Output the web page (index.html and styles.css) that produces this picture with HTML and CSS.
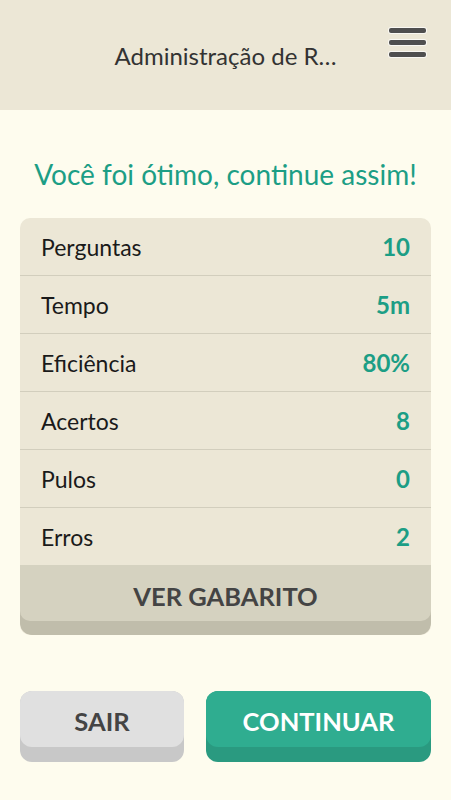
FILE: index.html
```html
<!DOCTYPE html>
<html lang="pt">
<head>
<meta charset="utf-8">
<title>Resultado</title>
<link rel="stylesheet" href="styles.css">
</head>
<body>
<header class="topbar">
  <div class="title">Administração de R…</div>
  <button class="menu" aria-label="Menu"><span></span><span></span><span></span></button>
</header>
<main class="content">
  <h1 class="headline">Você foi ótimo, continue assim!</h1>
  <section class="card">
    <div class="row"><span class="label">Perguntas</span><span class="value">10</span></div>
    <div class="row"><span class="label">Tempo</span><span class="value">5m</span></div>
    <div class="row"><span class="label">Eficiência</span><span class="value">80%</span></div>
    <div class="row"><span class="label">Acertos</span><span class="value">8</span></div>
    <div class="row"><span class="label">Pulos</span><span class="value">0</span></div>
    <div class="row last"><span class="label">Erros</span><span class="value">2</span></div>
    <button class="gabarito"><span class="face">VER GABARITO</span></button>
  </section>
  <div class="actions">
    <button class="btn btn-exit"><span class="face">SAIR</span></button>
    <button class="btn btn-continue"><span class="face">CONTINUAR</span></button>
  </div>
</main>
</body>
</html>
```
FILE: styles.css
```css
* { box-sizing: border-box; }
html, body { margin: 0; padding: 0; }
body {
  background: #fefcee;
  font-family: Lato, "Open Sans", sans-serif;
  width: 451px;
  min-height: 800px;
}
button { font-family: inherit; border: 0; padding: 0; margin: 0; cursor: pointer; }

.topbar {
  height: 110px;
  background: #ece7d6;
  display: flex;
  align-items: center;
  justify-content: center;
  position: relative;
}
.title {
  font-size: 24px;
  color: #333;
  white-space: nowrap;
  text-align: center;
  margin-top: 1px;
}
.menu {
  position: absolute;
  right: 25px;
  top: 28px;
  width: 37px;
  background: transparent;
  display: flex;
  flex-direction: column;
  gap: 7px;
}
.menu span {
  display: block;
  height: 5px;
  background: #4f4f4f;
  border-radius: 2px;
  box-shadow: 0 0 0 1px rgba(255,255,255,0.7);
}

.content { padding: 0 20px; }
.headline {
  margin: 0;
  padding-top: 47px;
  height: 108px;
  font-size: 28px;
  font-weight: 400;
  color: #1c9e85;
  text-align: center;
}
.card {
  background: #ece7d6;
  border-radius: 10px;
  overflow: hidden;
}
.row {
  height: 58px;
  border-bottom: 1px solid #d2cebd;
  display: flex;
  align-items: center;
  justify-content: space-between;
  padding: 0 21px;
  font-size: 23px;
}
.row.last { border-bottom: 0; height: 57px; }
.label { color: #1a1a1a; }
.value { color: #1c9e85; font-weight: 700; font-size: 24px; }

.gabarito {
  display: block;
  width: 100%;
  background: #c0bdab;
  border-radius: 0 0 12px 12px;
  padding-bottom: 14px;
}
.gabarito .face {
  display: flex;
  align-items: center;
  justify-content: center;
  height: 56px;
  padding-top: 5px;
  background: #d5d2c0;
  border-radius: 0 0 10px 10px;
  color: #444;
  font-weight: 700;
  font-size: 25.5px;
}

.actions {
  display: flex;
  gap: 22px;
  margin-top: 56px;
}
.btn {
  border-radius: 12px;
  padding-bottom: 15px;
}
.btn .face {
  display: flex;
  align-items: center;
  justify-content: center;
  height: 56px;
  padding-top: 3px;
  border-radius: 12px;
  font-weight: 700;
  font-size: 25.5px;
}
.btn-exit { width: 164px; background: #c8c8c8; }
.btn-exit .face { background: #e0e0e0; color: #444; }
.btn-continue { flex: 1; background: #2a9a80; }
.btn-continue .face { background: #2fad90; color: #fff; }
```
